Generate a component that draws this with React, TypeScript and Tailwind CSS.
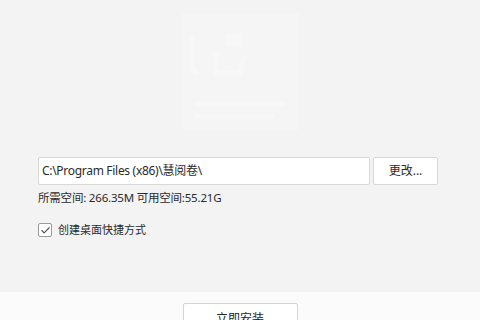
import { Check } from "lucide-react";

const font = { fontFamily: '"Noto Sans", "Noto Sans CJK SC", sans-serif' };

// faint product logo, almost washed out in the reference
const Logo = () => (
  <div className="mx-auto w-[117px] h-[117px] bg-[#f5f5f5]">
    <svg width="117" height="117" viewBox="0 0 117 117" fill="none">
      <path d="M10 22 L10 50 Q10 58 16 58" stroke="#f7f7f7" strokeWidth="6" />
      <rect x="44" y="20" width="16" height="14" fill="#f7f7f7" />
      <path d="M34 40 L34 60 L58 60 L62 44" stroke="#f7f7f7" strokeWidth="5" />
      <rect x="12" y="88" width="92" height="6" fill="#f7f7f7" />
      <rect x="12" y="101" width="80" height="5" fill="#f7f7f7" />
    </svg>
  </div>
);

export default function App() {
  return (
    <div className="w-[480px] h-[320px] overflow-hidden flex flex-col bg-[#f3f3f3] text-[#2a2a2a]" style={font}>
      <div className="h-[292px] shrink-0 pt-[13px]">
        <Logo />
        <div className="mt-[27px] pl-[38px] flex gap-[3px]">
          <div className="w-[332px] h-[28px] bg-white border border-[#d8d8d8] rounded-[2px] flex items-center pl-[3px] text-[12px] tracking-[-0.3px]">
            C:\Program Files (x86)\慧阅卷\
          </div>
          <button className="w-[65px] h-[28px] bg-white border border-[#d8d8d8] rounded-[2px] text-[12px] flex items-center justify-center">
            更改...
          </button>
        </div>
        <div className="pl-[38px] mt-[5px] text-[11.5px] leading-[16px] tracking-[-0.2px]">
          所需空间: 266.35M 可用空间:55.21G
        </div>
        <div className="pl-[38px] mt-[16px] flex items-center gap-[6px]">
          <div className="w-[14px] h-[14px] bg-white border border-[#9a9a9a] rounded-[2px] flex items-center justify-center">
            <Check size={11} strokeWidth={2.5} color="#555" />
          </div>
          <span className="text-[11px] leading-[16px]">创建桌面快捷方式</span>
        </div>
      </div>
      <div className="flex-1 bg-[#fbfbfb] flex justify-center pt-[11px]">
        <button className="w-[115px] h-[32px] shrink-0 bg-white border border-[#d4d4d4] rounded-[2px] text-[12px] text-[#222] flex items-center justify-center">
          立即安装
        </button>
      </div>
    </div>
  );
}
